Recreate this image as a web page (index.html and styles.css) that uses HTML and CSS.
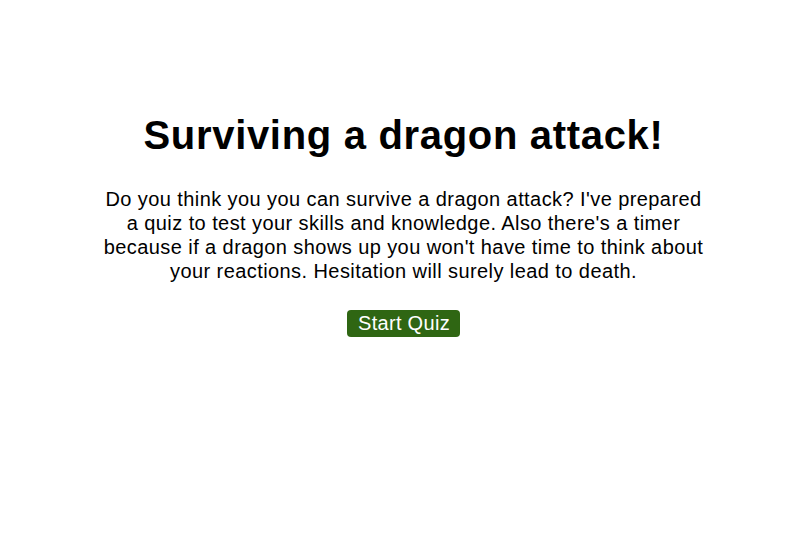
FILE: index.html
```html
<!DOCTYPE html>
<html>
<head>
<meta charset="utf-8">
<link rel="stylesheet" href="styles.css">
</head>
<body>
<main class="intro">
  <h1 class="title">Surviving a dragon attack!</h1>
  <p class="lead">Do you think you you can survive a dragon attack? I've prepared a quiz to test your skills and knowledge. Also there's a timer because if a dragon shows up you won't have time to think about your reactions. Hesitation will surely lead to death.</p>
  <button class="start">Start Quiz</button>
</main>
</body>
</html>
```
FILE: styles.css
```css
body {
  margin: 0;
  font-family: "Liberation Sans", Arial, sans-serif;
  color: #000;
  background: #fff;
}
.intro {
  width: 608px;
  margin: 0 auto;
  padding-top: 112px;
  display: flex;
  flex-direction: column;
  align-items: center;
  text-align: center;
}
.title {
  font-size: 40px;
  letter-spacing: 0.68px;
  font-weight: bold;
  margin: 0 0 29px;
  line-height: 46px;
}
.lead {
  font-size: 20px;
  letter-spacing: 0.42px;
  line-height: 24px;
  margin: 0 0 27px;
}
.start {
  font-family: "Liberation Sans", Arial, sans-serif;
  font-size: 20px;
  letter-spacing: 0.3px;
  color: #fff;
  background: #2f6613;
  border: none;
  border-radius: 4px;
  padding: 2px 10px 2px 11px;
  line-height: 23px;
}
```
